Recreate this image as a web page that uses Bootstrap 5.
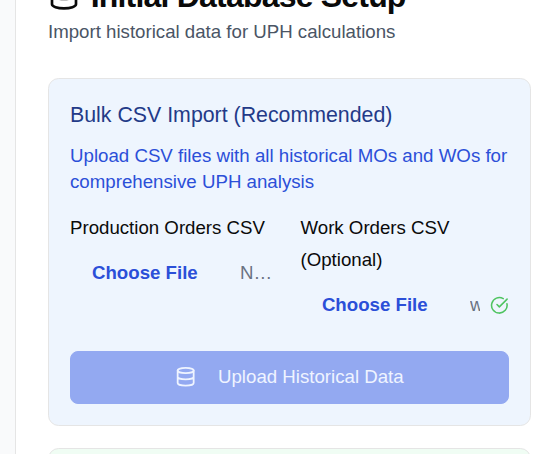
<!DOCTYPE html>
<html lang="en">
<head>
<meta charset="utf-8">
<meta name="viewport" content="width=device-width, initial-scale=1">
<title>Initial Database Setup</title>
<link href="https://cdn.jsdelivr.net/npm/bootstrap@5.3.0/dist/css/bootstrap.min.css" rel="stylesheet">
<style>
html, body { height: 100%; overflow: hidden; }
body { font-family: "Liberation Sans", Arial, sans-serif; font-size: 18.67px; color: #0a0a0a; }
.side-rail { width: 16px; background: #f9fafb; border-color: #e5e5e5 !important; }
.main-pane { min-width: 0; padding-left: 32px; padding-right: 23px; }
.page-title { font-size: 32px; line-height: 42px; letter-spacing: -.8px; margin-top: -25px; gap: 10.7px; }
.page-title svg { margin-top: -2px; }
.page-note { line-height: 26px; margin-top: 2px; color: #4a5565; }
.panel { --bs-card-border-color: #e5e5e5; --bs-card-border-radius: 10.67px; --bs-card-inner-border-radius: 9.67px; --bs-card-spacer-x: 21px; --bs-card-spacer-y: 21px; color: inherit; }
.panel-blue { --bs-card-bg: #eef5fe; margin-top: 33px; height: 348px; }
.panel-green { --bs-card-bg: #f0fdf4; margin-top: 22px; height: 40px; }
.panel-title { font-size: 21.33px; line-height: 30px; color: #233a88; }
.panel-text { line-height: 26px; margin-top: 13px; color: #2b4fd8; font-size: 18.7px; }
.upload-fields { display: grid; grid-template-columns: repeat(2, minmax(0, 1fr)); gap: 22px; margin-top: 17px; height: 112px; }
.field-label { line-height: 32px; }
.file-line { height: 48px; margin-top: 5px; line-height: 48px; padding-left: 22px; }
.upload-fields > :last-child .file-line { padding-left: 21.4px; }
.choose { color: #2b4fd8; width: 148px; }
.file-name { color: #6a7282; width: 34px; }
.file-picked { width: 10px; margin-right: 10px; }
.btn-upload { --bs-btn-bg: #93a9f1; --bs-btn-disabled-bg: #93a9f1; --bs-btn-disabled-border-color: #93a9f1; --bs-btn-disabled-color: #eff4ff; --bs-btn-disabled-opacity: 1; --bs-btn-font-size: 18.67px; --bs-btn-border-radius: 8px; height: 53px; margin-top: 27px; gap: 21.33px; padding-top: 5px; padding-bottom: 7px; }
svg { fill: none; stroke: currentColor; stroke-linecap: round; stroke-linejoin: round; }
.check-icon { color: #4fc461; }
</style>
<script src="https://cdn.jsdelivr.net/npm/bootstrap@5.3.0/dist/js/bootstrap.bundle.min.js"></script>
</head>
<body class="d-flex bg-white">
<div class="side-rail flex-shrink-0 border-end"></div>
<main class="main-pane flex-grow-1">
  <h1 class="page-title d-flex align-items-center fw-bold mb-0 text-nowrap">
    <svg width="32" height="32" viewBox="0 0 24 24" stroke-width="2"><ellipse cx="12" cy="5" rx="9" ry="3"/><path d="M3 5v14a9 3 0 0 0 18 0V5M3 12a9 3 0 0 0 18 0"/></svg>
    <span>Initial Database Setup</span>
  </h1>
  <p class="page-note mb-0">Import historical data for UPH calculations</p>
  <section class="card panel panel-blue">
    <div class="card-body">
      <h2 class="panel-title fw-normal mb-0">Bulk CSV Import (Recommended)</h2>
      <p class="panel-text mb-0 text-nowrap">Upload CSV files with all historical MOs and WOs for<br>comprehensive UPH analysis</p>
      <div class="upload-fields">
        <div>
          <div class="field-label">Production Orders CSV</div>
          <div class="file-line d-flex align-items-center">
            <span class="choose fw-bold">Choose File</span><span class="file-name">N…</span>
          </div>
        </div>
        <div>
          <div class="field-label">Work Orders CSV<br>(Optional)</div>
          <div class="file-line d-flex align-items-center">
            <span class="choose fw-bold flex-shrink-0">Choose File</span><span class="file-name file-picked overflow-hidden flex-shrink-0">w</span>
            <svg class="check-icon flex-shrink-0" width="18.67" height="18.67" viewBox="0 0 24 24" stroke-width="2"><path d="M21.801 10A10 10 0 1 1 17 3.335"/><path d="m9 11 3 3L22 4"/></svg>
          </div>
        </div>
      </div>
      <button class="btn btn-upload w-100 d-flex align-items-center justify-content-center" disabled>
        <svg width="21.33" height="21.33" viewBox="0 0 24 24" stroke-width="2"><ellipse cx="12" cy="5" rx="9" ry="3"/><path d="M3 5v14a9 3 0 0 0 18 0V5M3 12a9 3 0 0 0 18 0"/></svg>
        <span>Upload Historical Data</span>
      </button>
    </div>
  </section>
  <section class="card panel panel-green"></section>
</main>
</body>
</html>
